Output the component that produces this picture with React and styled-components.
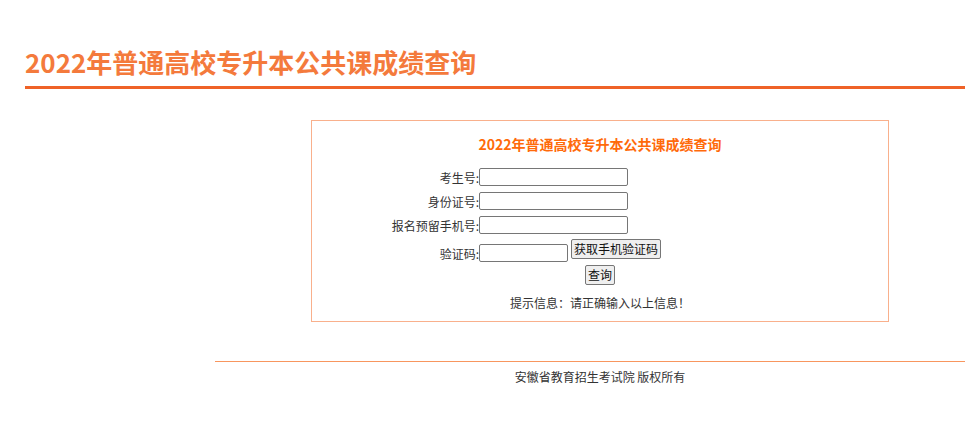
import styled, { createGlobalStyle } from "styled-components";

const GlobalStyle = createGlobalStyle`
  html, body {
    margin: 0;
    padding: 0;
    background: #fff;
    overflow: hidden;
  }
  body {
    font-family: "Noto Sans CJK SC", "Noto Sans", sans-serif;
    color: #333;
  }
`;

const Page = styled.div`
  width: 1200px;
`;

const Header = styled.div`
  margin: 0 0 0 25px;
  padding-top: 40px;
  border-bottom: 3px solid #ef6227;
`;

const Title = styled.h1`
  margin: 0;
  height: 46px;
  font-size: 26px;
  line-height: 44px;
  font-weight: bold;
  color: #f47a3c;
`;

const Panel = styled.div`
  width: 576px;
  margin: 31px auto 0;
  border: 1px solid #f9b08c;
  padding: 12px 0 9px;
`;

const PanelTitle = styled.div`
  text-align: center;
  font-size: 14px;
  line-height: 22px;
  font-weight: bold;
  color: #ff6a0a;
  margin-bottom: 7px;
`;

const Row = styled.div`
  display: flex;
  align-items: flex-end;
  height: ${(p) => p.h || 24}px;
  padding-bottom: ${(p) => p.pb || 0}px;
  box-sizing: border-box;
`;

const Label = styled.label`
  width: 167px;
  text-align: right;
  font-size: 12px;
  line-height: 16px;
  color: #333;
  white-space: nowrap;
`;

const Input = styled.input`
  width: ${(p) => p.w || 149}px;
  height: 18px;
  box-sizing: border-box;
  margin: 0;
  padding: 1px 2px;
  border: 1px solid #767676;
  border-radius: 2px;
  font-size: 13px;
  background: #fff;
`;

const Button = styled.button`
  height: 20px;
  box-sizing: border-box;
  margin: 0 0 0 ${(p) => p.ml || 0}px;
  padding: 0 2px;
  border: 1px solid #767676;
  border-radius: 2px;
  background: #efefef;
  font-family: "Noto Sans CJK SC", sans-serif;
  font-size: 12px;
  line-height: 16px;
  color: #111;
  align-self: ${(p) => (p.ml ? "center" : "auto")};
  position: relative;
  top: ${(p) => (p.ml ? 1 : 0)}px;
`;

const Center = styled.div`
  display: flex;
  justify-content: center;
  margin-top: ${(p) => p.mt || 0}px;
`;

const Hint = styled.div`
  text-align: center;
  font-size: 12px;
  line-height: 18px;
  color: #333;
  margin-top: 9px;
`;

const Footer = styled.div`
  width: 770px;
  margin: 39px auto 0;
  border-top: 1px solid #f8965e;
  padding-top: 6px;
  text-align: center;
  font-size: 12px;
  line-height: 18px;
  color: #333;
`;

export default function App() {
  return (
    <Page>
      <GlobalStyle />
      <Header>
        <Title>2022年普通高校专升本公共课成绩查询</Title>
      </Header>
      <Panel>
        <PanelTitle>2022年普通高校专升本公共课成绩查询</PanelTitle>
        <Row>
          <Label>考生号:</Label>
          <Input />
        </Row>
        <Row>
          <Label>身份证号:</Label>
          <Input />
        </Row>
        <Row>
          <Label>报名预留手机号:</Label>
          <Input />
        </Row>
        <Row h={29} pb={1}>
          <Label>验证码:</Label>
          <Input w={89} />
          <Button ml={3}>获取手机验证码</Button>
        </Row>
        <Center mt={2}>
          <Button>查询</Button>
        </Center>
        <Hint>提示信息：请正确输入以上信息！</Hint>
      </Panel>
      <Footer>安徽省教育招生考试院 版权所有</Footer>
    </Page>
  );
}
